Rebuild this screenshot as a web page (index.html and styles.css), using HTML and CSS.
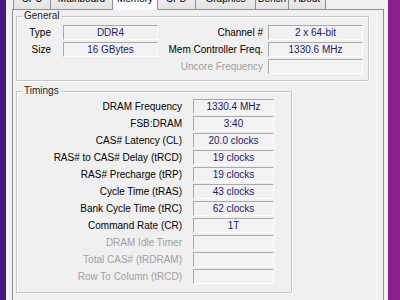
FILE: index.html
```html
<!DOCTYPE html>
<html>
<head>
<meta charset="utf-8">
<link rel="stylesheet" href="styles.css">
</head>
<body>
  <div class="edge-l"></div>
  <div class="win">
    <div class="tabs">
      <div class="tab t-cpu">CPU</div>
      <div class="tab t-mb">Mainboard</div>
      <div class="tab t-mem active">Memory</div>
      <div class="tab t-spd">SPD</div>
      <div class="tab t-gfx">Graphics</div>
      <div class="tab t-bench">Bench</div>
      <div class="tab t-about">About</div>
    </div>
    <div class="page">
      <fieldset class="group general">
        <legend>General</legend>
        <div class="ggrid">
          <div class="lbl l1">Type</div>
          <div class="val">DDR4</div>
          <div class="lbl l3">Channel #</div>
          <div class="val">2 x 64-bit</div>

          <div class="lbl l1">Size</div>
          <div class="val">16 GBytes</div>
          <div class="lbl l3">Mem Controller Freq.</div>
          <div class="val">1330.6 MHz</div>

          <div></div>
          <div></div>
          <div class="lbl l3 off">Uncore Frequency</div>
          <div class="val"></div>
        </div>
      </fieldset>
      <fieldset class="group timings">
        <legend>Timings</legend>
        <div class="tgrid">
          <div class="lbl">DRAM Frequency</div><div class="val">1330.4 MHz</div>
          <div class="lbl">FSB:DRAM</div><div class="val">3:40</div>
          <div class="lbl">CAS# Latency (CL)</div><div class="val">20.0 clocks</div>
          <div class="lbl">RAS# to CAS# Delay (tRCD)</div><div class="val">19 clocks</div>
          <div class="lbl">RAS# Precharge (tRP)</div><div class="val">19 clocks</div>
          <div class="lbl">Cycle Time (tRAS)</div><div class="val">43 clocks</div>
          <div class="lbl">Bank Cycle Time (tRC)</div><div class="val">62 clocks</div>
          <div class="lbl">Command Rate (CR)</div><div class="val">1T</div>
          <div class="lbl off">DRAM Idle Timer</div><div class="val"></div>
          <div class="lbl off">Total CAS# (tRDRAM)</div><div class="val"></div>
          <div class="lbl off">Row To Column (tRCD)</div><div class="val"></div>
        </div>
      </fieldset>
    </div>
  </div>
  <div class="edge-r"></div>
</body>
</html>
```

FILE: styles.css
```css
* { box-sizing: border-box; }
html, body {
  margin: 0;
  padding: 0;
}
body {
  width: 400px;
  height: 300px;
  overflow: hidden;
  display: flex;
  font-family: "Liberation Sans", Arial, sans-serif;
  font-size: 10px;
  color: #000;
  background: #f0f0f0;
}
.edge-l {
  width: 6px;
  flex: none;
  background: #4a1480;
}
.edge-r {
  width: 12px;
  flex: none;
  background: #8b1f8c;
}
.win {
  flex: 1;
  background: #f0f0f0;
  padding: 0 4px 0 5px;
  border-left: 1px solid #fbfbfb;
  display: flex;
  flex-direction: column;
}
.tabs {
  display: flex;
  height: 19px;
  margin-top: -9px;
  padding-left: 1px;
  flex: none;
  position: relative;
  z-index: 1;
}
.tab {
  height: 19px;
  line-height: 14px;
  text-align: center;
  color: #000;
  border-top: 1px solid #8e8f8f;
  border-right: 1px solid #8e8f8f;
  border-bottom: 1px solid #8e8f8f;
  background: linear-gradient(#f2f2f2, #e3e3e3);
}
.t-cpu { width: 38px; border-left: 1px solid #8e8f8f; }
.t-mb { width: 62px; }
.t-mem { width: 45px; }
.t-spd { width: 38px; }
.t-gfx { width: 60px; }
.t-bench { width: 33px; }
.t-about { width: 37px; }
.tab.active {
  background: #fbfbfb;
  border-bottom-color: #fbfbfb;
  line-height: 13px;
}
.page {
  flex: 1;
  background: #f0f0f0;
  border: 1px solid #8e8f8f;
  border-bottom: none;
  margin-top: -1px;
  padding: 0 0 0 3px;
  box-shadow: inset -6px 0 0 #f0f0f0, inset -7px 0 0 #fafafa;
}
.group {
  margin: 0;
  min-width: 0;
  border: 1px solid #c4c4c4;
  box-shadow: 1px 1px 0 #fff, inset 1px 1px 0 #fff;
  padding: 0;
}
.group legend {
  margin-left: 5px;
  padding: 0 2px;
  line-height: 12px;
  color: #222;
}
.general {
  width: 353px;
  margin-top: 0;
  padding: 3px 0 6px 0;
}
.timings {
  width: 276px;
  margin-top: 4px;
  padding: 2px 0 8px 0;
}
.ggrid {
  display: grid;
  grid-template-columns: 46px 95px 110px 95px;
  grid-auto-rows: 15px;
  row-gap: 2px;
}
.tgrid {
  display: grid;
  grid-template-columns: 176px 81px;
  grid-auto-rows: 15px;
  row-gap: 2px;
}
.lbl {
  text-align: right;
  line-height: 15px;
  white-space: nowrap;
}
.ggrid .l1 { padding-right: 12px; }
.ggrid .l3 { padding-right: 5px; }
.tgrid .lbl { padding-right: 11px; }
.lbl.off { color: #a0a0a0; }
.val {
  border: 1px solid;
  border-color: #a9a9a9 #fdfdfd #fdfdfd #a9a9a9;
  background: #f2f2f2;
  color: #1a1a66;
  text-align: center;
  line-height: 13px;
  white-space: nowrap;
}
```
